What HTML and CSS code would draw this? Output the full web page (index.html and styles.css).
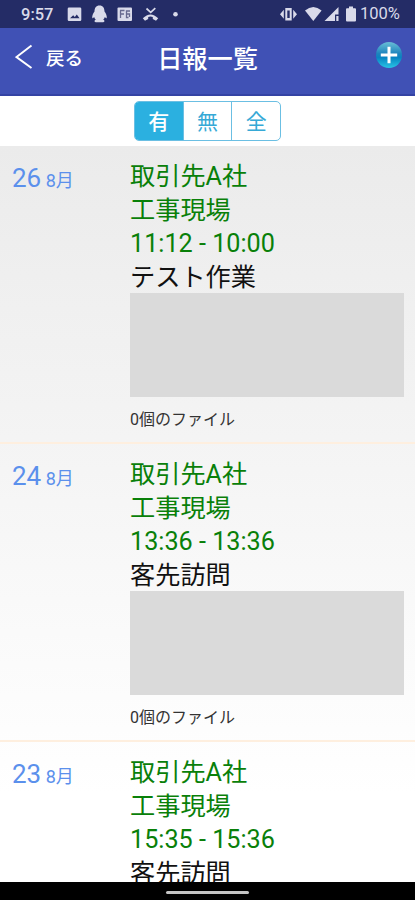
FILE: index.html
```html
<!DOCTYPE html>
<html lang="ja">
<head>
<meta charset="utf-8">
<title>日報一覧</title>
<link rel="stylesheet" href="styles.css">
</head>
<body>
<div class="status">
  <span class="clock">9:57</span>
  <svg class="icons-left" width="116" height="18" viewBox="66 5 116 18" fill="#d9daea">
    <path fill-rule="evenodd" d="M69 7.5h11q1.300 0 1.300 1.300v11q0 1.200-1.300 1.200H69q-1.300 0-1.300-1.200v-11q0-1.300 1.300-1.300zM70 18.300h9.500l-2.700-3.800-2 2.500-1.600-1.700z"/>
    <path d="M99.500 5.500c-3.500 0-5 2.600-5 6-1.500 2-2.600 4.500-2.200 6.500.6.500 1.200-.2 1.900-1 .2 1.300.8 2 1.600 2.600-2.100 1.100-1.400 2.700.7 2.700h6c2.100 0 2.800-1.600.7-2.700.8-.6 1.400-1.300 1.600-2.600.7.800 1.300 1.500 1.900 1 .4-2-.7-4.500-2.200-6.500 0-3.400-1.500-6-5-6z"/>
    <rect x="117.500" y="7.500" width="14.500" height="13.500" rx="1"/>
    <path d="M120 10.500h4.500M120.500 10.500v7.500M120.500 14h3.500M130 11h-3.500v6.500h2M126.500 14h3v3" fill="none" stroke="#67698f" stroke-width="1.300"/>
    <path d="M146.500 8.500l4.200 3.800 4.600-4.200" fill="none" stroke="#d9daea" stroke-width="1.700"/>
    <path d="M142.800 18.200q7.700-7.600 15.400 0l-2.200 2.500-3.200-1.700v-2.100q-2.300-.8-4.600 0V19l-3.200 1.700z"/>
    <circle cx="175.500" cy="14.300" r="2.300"/>
  </svg>
  <svg class="icons-right" width="78" height="18" viewBox="279 5 78 18" fill="#d9daea">
    <path fill-rule="evenodd" d="M285.300 8h6.400v12.500h-6.400zM287.300 10.500v7.500h2.400v-7.500z"/>
    <path d="M283.800 9.700v9L280 14.200zM293.200 9.700v9l3.800-4.500z"/>
    <path d="M305 10.500q8.300-7 16.600 0L313.300 21z"/>
    <path d="M338.500 7v7.500H335V21h-10.500zM336.300 16h2.200v5h-2.200z"/>
    <path d="M349 6.500h4v1.700h2q1 0 1 1v11.300q0 1-1 1h-8q-1 0-1-1V9.200q0-1 1-1h2z"/>
  </svg>
  <span class="battery">100%</span>
</div>
<header class="nav">
  <div class="back">
    <svg width="18" height="26" viewBox="0 0 18 26"><path d="M16.500 1.500L1.500 13l15 11" fill="none" stroke="#fff" stroke-width="2"/></svg>
    <span>戻る</span>
  </div>
  <h1>日報一覧</h1>
  <svg class="add" width="28" height="28" viewBox="0 0 28 28">
    <defs><linearGradient id="g" x1="0" y1="0" x2="0" y2="1"><stop offset="0" stop-color="#69bed6"/><stop offset=".45" stop-color="#1d83bd"/><stop offset=".6" stop-color="#0784c2"/><stop offset="1" stop-color="#29c5e6"/></linearGradient></defs>
    <circle cx="14" cy="14" r="13" fill="url(#g)"/>
    <path d="M14 5.800v16.400M5.800 14h16.400" stroke="#fff" stroke-width="3"/>
  </svg>
</header>
<div class="filter">
  <div class="segments"><span class="on">有</span><span>無</span><span>全</span></div>
</div>
<main class="list">
  <section class="row">
    <div class="date"><b>26</b> 8月</div>
    <div class="body">
      <p>取引先A社</p><p>工事現場</p><p>11:12 - 10:00</p><p class="work">テスト作業</p>
      <div class="box"></div>
      <div class="files">0個のファイル</div>
    </div>
  </section>
  <section class="row">
    <div class="date"><b>24</b> 8月</div>
    <div class="body">
      <p>取引先A社</p><p>工事現場</p><p>13:36 - 13:36</p><p class="work">客先訪問</p>
      <div class="box"></div>
      <div class="files">0個のファイル</div>
    </div>
  </section>
  <section class="row">
    <div class="date"><b>23</b> 8月</div>
    <div class="body">
      <p>取引先A社</p><p>工事現場</p><p>15:35 - 15:36</p><p class="work">客先訪問</p>
    </div>
  </section>
</main>
<footer class="gesture"><span></span></footer>
</body>
</html>
```
FILE: styles.css
```css
* { box-sizing: border-box; }
body {
  margin: 0;
  width: 415px;
  height: 900px;
  overflow: hidden;
  display: flex;
  flex-direction: column;
  font-family: Roboto, "Noto Sans CJK JP", sans-serif;
  background: #fff;
}
.status {
  flex: none;
  height: 28px;
  background: #242c66;
  display: flex;
  align-items: center;
  padding: 0 14px 0 21px;
  color: #d9daea;
  font-size: 16.5px;
  line-height: 28px;
}
.clock { width: 45px; padding-top: 1px; font-weight: 500; }
.icons-right { margin-left: auto; }
.battery { width: 41px; margin-left: 3px; white-space: nowrap; }
.nav {
  flex: none;
  height: 68px;
  padding-bottom: 8px;
  background: #4051b5;
  border-bottom: 2px solid #3443a4;
  display: grid;
  grid-template-columns: 1fr auto 1fr;
  align-items: center;
  color: #fff;
}
.back { display: flex; align-items: center; gap: 13px; padding-left: 15px; font-size: 18.5px; font-weight: 500; }
.nav h1 { margin: 0; padding-top: 6px; font-size: 25.2px; font-weight: 500; line-height: 36px; }
.add { justify-self: end; margin: -4px 12px 0 0; }
.filter { flex: none; height: 50px; display: flex; justify-content: center; padding-top: 5px; }
.segments {
  display: flex;
  width: 147px;
  height: 40px;
  border: 1px solid #6bbfe3;
  border-radius: 5px;
  overflow: hidden;
  color: #36a9d6;
  font-size: 21px;
  line-height: 41px;
  text-align: center;
}
.segments span { flex: 1; border-left: 1px solid #6bbfe3; }
.segments .on { background: #2bb0e0; color: #fff; border-left: 0; font-weight: 500; }
.list {
  flex: 1;
  min-height: 0;
  overflow: hidden;
  background: linear-gradient(#ebebeb, #fff 88%);
}
.row {
  display: flex;
  height: 298px;
  padding: 14px 11px 0 12px;
  border-bottom: 2px solid #feefdf;
}
.date { width: 118px; color: #5b90ec; font-size: 18px; line-height: 36px; }
.date b { font-size: 26px; font-weight: 400; }
.body { flex: 1; }
.body p { margin: 0; height: 33.700px; line-height: 34.500px; font-size: 25.200px; color: #098009; }
.body .work { height: 32px; color: #111; }
.box { height: 104px; background: #dadada; }
.files { font-size: 16px; line-height: 24px; margin-top: 11px; color: #333; }
.gesture { flex: none; height: 18px; padding-top: 2px; background: #000; display: flex; justify-content: center; align-items: center; }
.gesture span { width: 83px; height: 3px; border-radius: 2px; background: #c4c4c4; }
```
